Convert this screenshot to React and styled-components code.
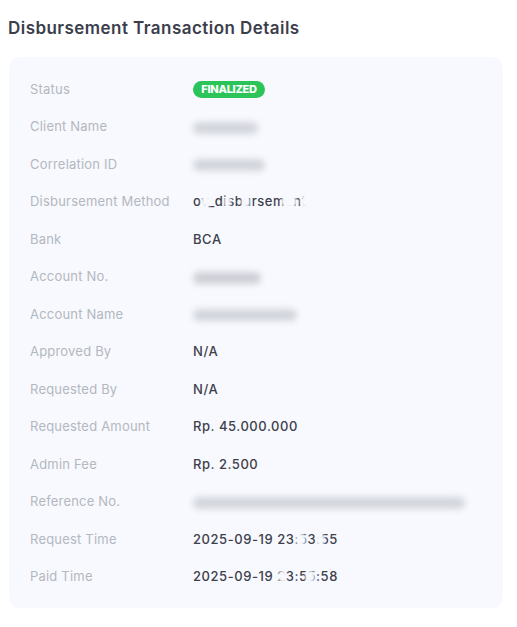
import React from "react";
import styled, { createGlobalStyle } from "styled-components";

const Global = createGlobalStyle`
  html, body { margin: 0; padding: 0; background: #ffffff; }
  body { font-family: Inter, "Noto Sans", "Liberation Sans", sans-serif; -webkit-font-smoothing: antialiased; }
`;

const Page = styled.div`
  padding: 17px 14px 0 8px;
  width: 517px;
  box-sizing: border-box;
`;

const Title = styled.h2`
  margin: 0 0 18px 0;
  font-size: 17px;
  line-height: 22px;
  font-weight: 600;
  color: #3b3e4b;
  letter-spacing: 0.45px;
`;

const Card = styled.div`
  margin-left: 1px;
  width: 494px;
  box-sizing: border-box;
  background: #f7f9fe;
  border-radius: 11px;
  padding: 13px 21px;
`;

const Row = styled.div`
  display: grid;
  grid-template-columns: 163px 1fr;
  align-items: center;
  height: 37.5px;
`;

const Label = styled.div`
  font-size: 13px;
  color: #b4b7bf;
  font-weight: 400;
  letter-spacing: 0.2px;
`;

const Value = styled.div`
  position: relative;
  font-size: 13px;
  color: #3d404b;
  font-weight: 500;
  letter-spacing: 0.55px;
  white-space: nowrap;
`;

const Badge = styled.span`
  display: inline-flex;
  align-items: center;
  justify-content: center;
  width: 72px;
  height: 17px;
  border-radius: 9px;
  background: #2ac458;
  color: #ffffff;
  font-size: 11px;
  font-weight: 800;
  letter-spacing: -0.3px;
`;

const Blur = styled.span`
  display: inline-block;
  width: ${(p) => p.$w}px;
  height: 12px;
  border-radius: 6px;
  background: ${(p) => p.$c || "#d3d5dc"};
  filter: blur(3px);
  vertical-align: middle;
`;

const Mask = styled.span`
  position: absolute;
  top: 50%;
  left: ${(p) => p.$x}px;
  width: ${(p) => p.$w || 10}px;
  height: 13px;
  margin-top: -6px;
  border-radius: 50%;
  background: #f7f9fe;
  filter: blur(1.5px);
`;

const rows = [
  { label: "Status", badge: "FINALIZED" },
  { label: "Client Name", blur: 65 },
  { label: "Correlation ID", blur: 72 },
  {
    label: "Disbursement Method",
    text: "ov_disbursement",
    masks: [
      { x: 8, w: 10 },
      { x: 31, w: 7 },
      { x: 48, w: 9 },
      { x: 88, w: 16 },
      { x: 107, w: 9 },
    ],
  },
  { label: "Bank", text: "BCA" },
  { label: "Account No.", blur: 68, color: "#cdcfd6" },
  { label: "Account Name", blur: 104 },
  { label: "Approved By", text: "N/A" },
  { label: "Requested By", text: "N/A" },
  { label: "Requested Amount", text: "Rp. 45.000.000" },
  { label: "Admin Fee", text: "Rp. 2.500" },
  { label: "Reference No.", blur: 272 },
  {
    label: "Request Time",
    text: "2025-09-19 23:53:55",
    masks: [
      { x: 103, w: 10 },
      { x: 123, w: 9 },
    ],
  },
  {
    label: "Paid Time",
    text: "2025-09-19 23:55:58",
    masks: [
      { x: 85, w: 9 },
      { x: 112, w: 10 },
    ],
  },
];

export default function App() {
  return (
    <Page>
      <Global />
      <Title>Disbursement Transaction Details</Title>
      <Card>
        {rows.map((r) => (
          <Row key={r.label}>
            <Label>{r.label}</Label>
            <Value>
              {r.badge && <Badge>{r.badge}</Badge>}
              {r.blur && <Blur $w={r.blur} $c={r.color} />}
              {r.text}
              {r.masks &&
                r.masks.map((m, i) => <Mask key={i} $x={m.x} $w={m.w} />)}
            </Value>
          </Row>
        ))}
      </Card>
    </Page>
  );
}
